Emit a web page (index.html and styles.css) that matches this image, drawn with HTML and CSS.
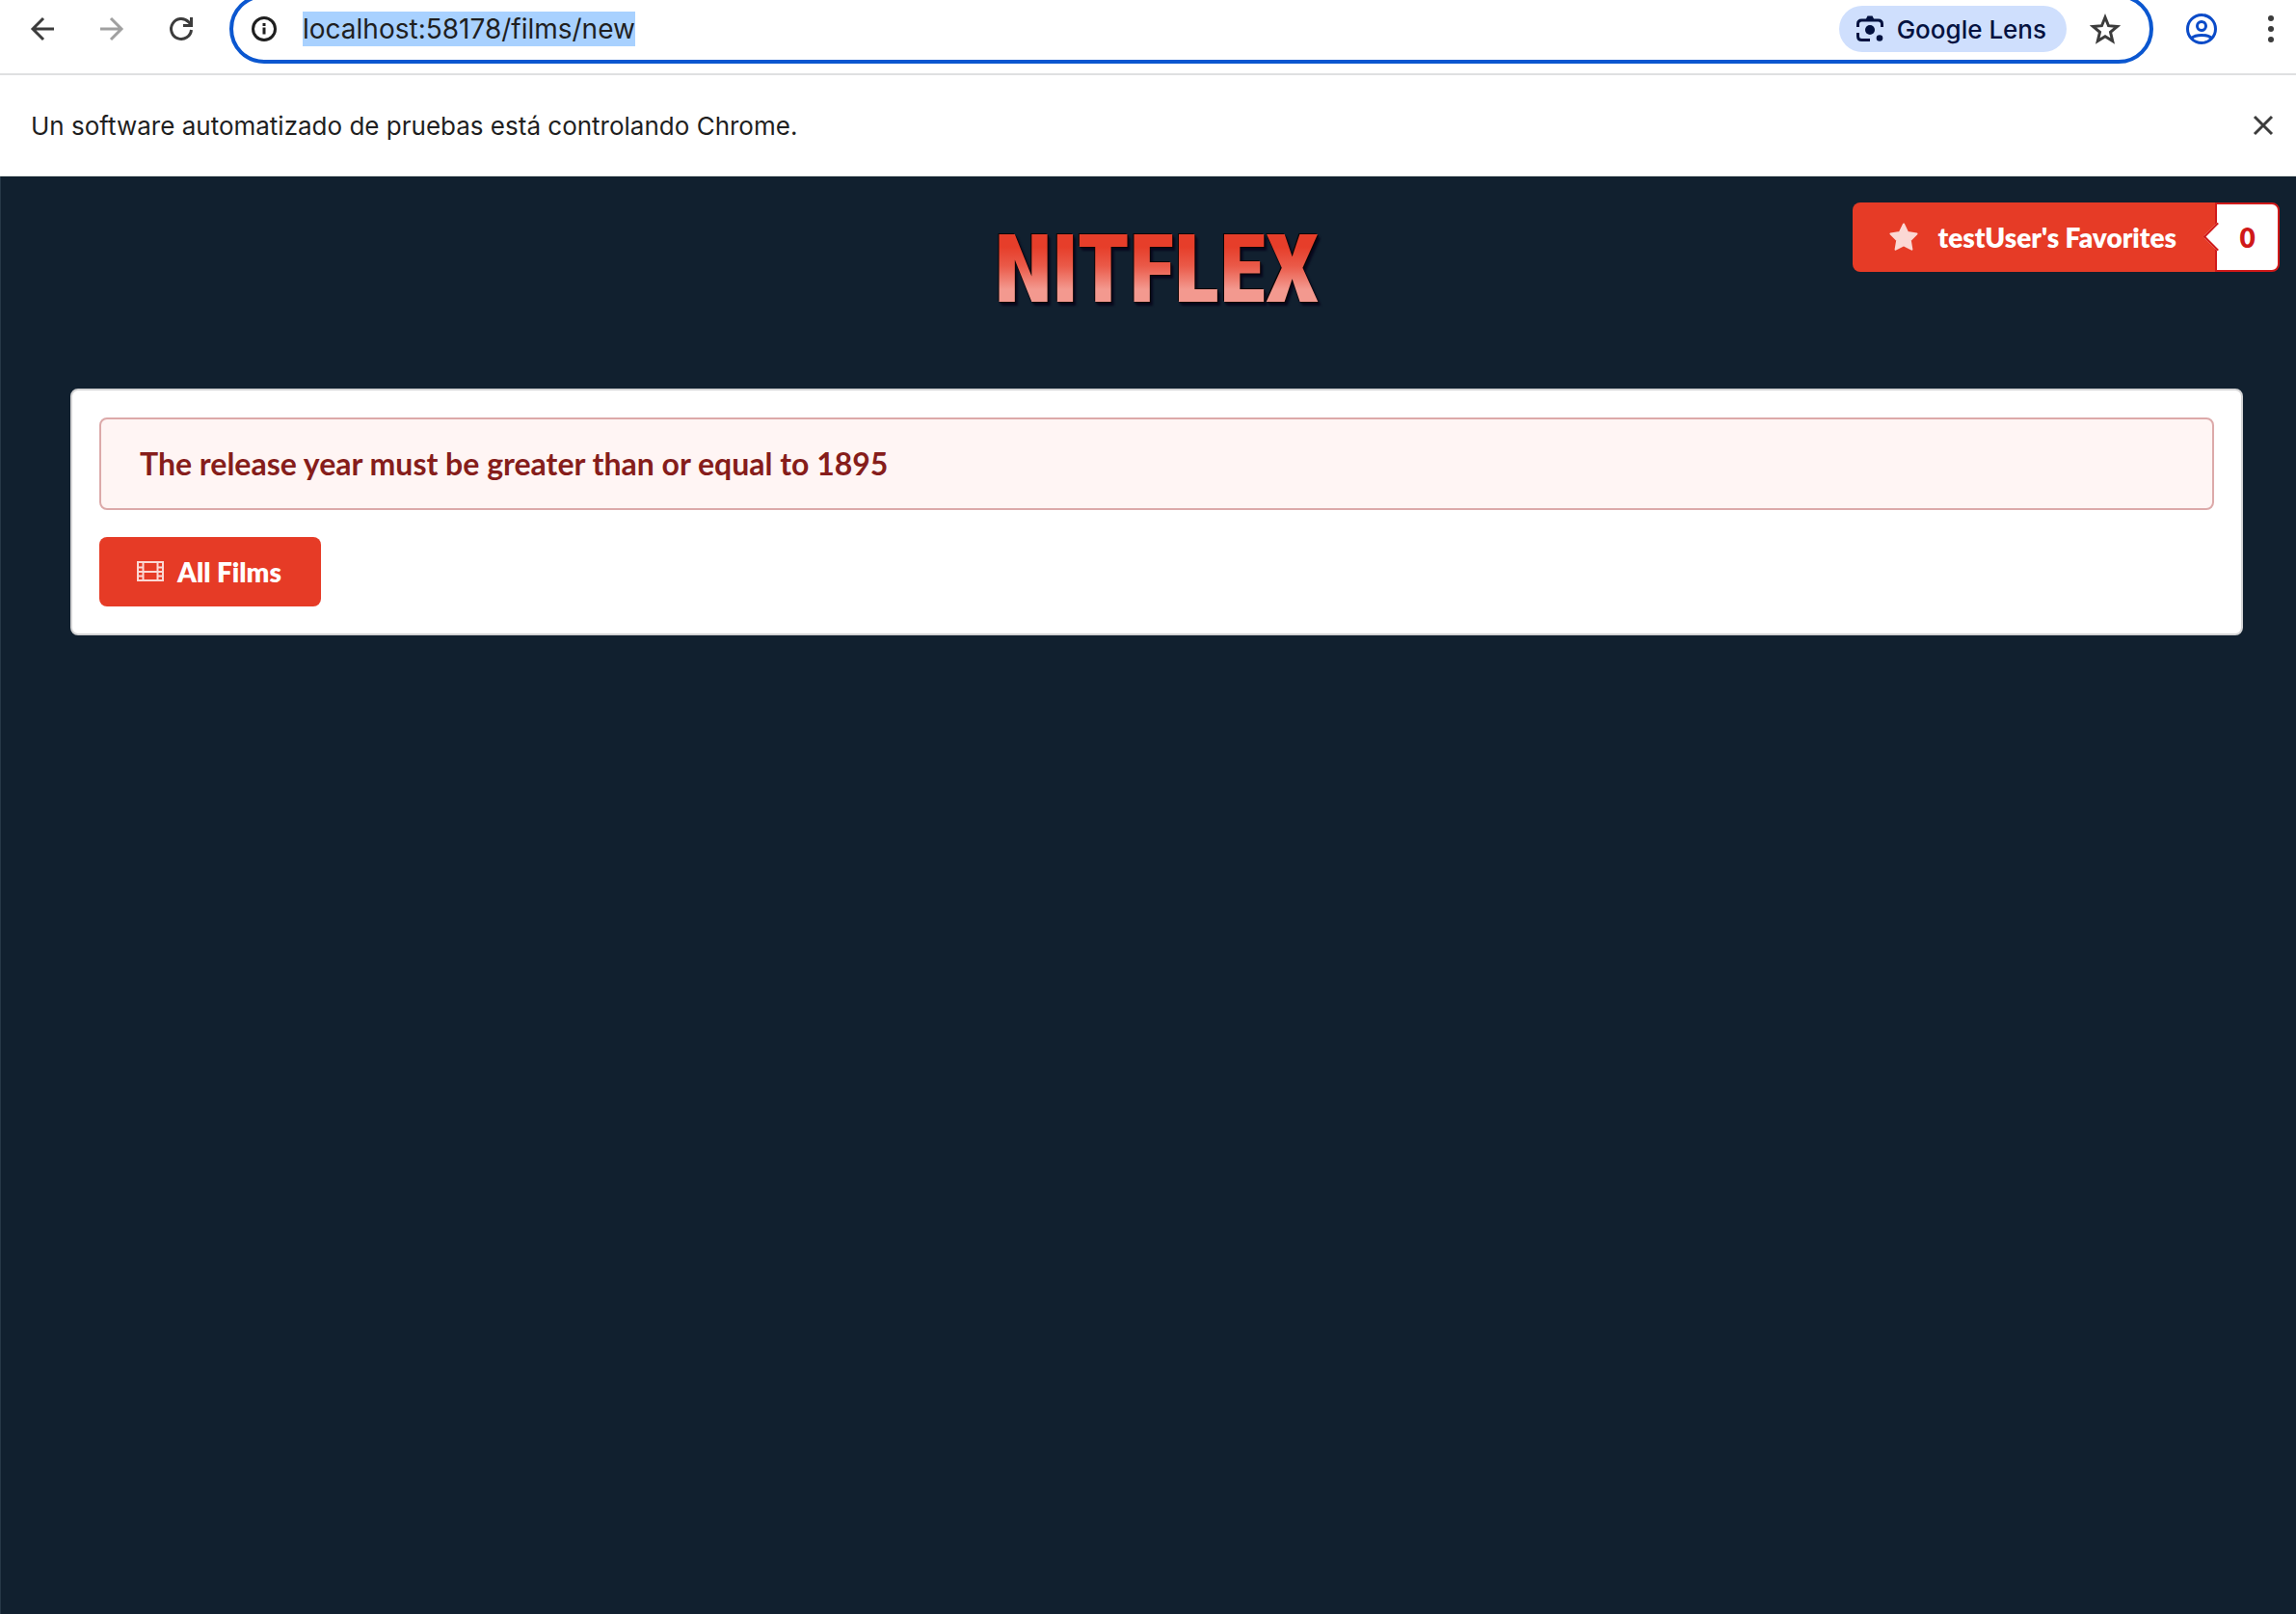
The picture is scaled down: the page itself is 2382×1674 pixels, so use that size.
FILE: index.html
```html
<!DOCTYPE html>
<html lang="es">
<head>
<meta charset="utf-8">
<title>Nitflex</title>
<link rel="stylesheet" href="styles.css">
</head>
<body>
<header class="toolbar">
  <div class="nav-buttons">
    <button class="icon-button" type="button" aria-label="Atrás"><svg viewBox="0 0 32 32" width="32" height="32" fill="none" stroke="#3c3c3c" stroke-width="3"><path d="M28 16H6.500M17 5L6 16l11 11"/></svg></button>
    <button class="icon-button" type="button" aria-label="Adelante"><svg viewBox="0 0 32 32" width="32" height="32" fill="none" stroke="#a0a0a0" stroke-width="3"><path d="M4 16h21.500M15 5l11 11-11 11"/></svg></button>
    <button class="icon-button" type="button" aria-label="Recargar"><svg viewBox="0 0 32 32" width="32" height="32" fill="none" stroke="#3c3c3c" stroke-width="3"><path d="M26.500 17A10.500 10.500 0 1 1 23.500 8.600L26 11M26.500 4v8.500H18"/></svg></button>
  </div>
  <div class="omnibox">
    <svg viewBox="0 0 28 28" width="28" height="28" fill="none" stroke="#1f1f1f" stroke-width="3"><circle cx="14" cy="14" r="11.500"/><path d="M14 12.500v7M14 8v3"/></svg>
    <input class="address" type="text" value="localhost:58178/films/new" aria-label="Dirección">
    <button class="lens" type="button">
      <svg viewBox="0 0 32 32" width="32" height="32" fill="none" stroke="#041240" stroke-width="3"><path d="M3.500 14v-3q0-4 4-4h17q4 0 4 4v3M3.500 20v3.500q0 4 4 4H16"/><path d="M11.500 6.500l2-4h5l2 4z" fill="#041240" stroke="none"/><circle cx="16" cy="17" r="5" fill="#041240" stroke="none"/><circle cx="26" cy="25.500" r="3.300" fill="#041240" stroke="none"/></svg>
      Google Lens
    </button>
    <button class="icon-button" type="button" aria-label="Añadir a favoritos"><svg viewBox="0 0 32 32" width="32" height="32" fill="none" stroke="#3c3c3c" stroke-width="3"><path d="M16 4l3.500 8.700 9 .700-7 5.900 2.200 9.200L16 23.700l-7.700 4.800 2.200-9.200-7-5.900 9-.700z"/></svg></button>
  </div>
  <div class="nav-buttons">
    <button class="icon-button" type="button" aria-label="Perfil"><svg viewBox="0 0 32 32" width="32" height="32" fill="none" stroke="#0b4bc8" stroke-width="3"><circle cx="16" cy="16" r="14.500"/><circle cx="16" cy="13" r="4.500"/><path d="M5.500 25.500Q9 22.500 16 22.500t10.500 3"/></svg></button>
    <button class="icon-button" type="button" aria-label="Menú"><svg viewBox="0 0 32 32" width="32" height="32" fill="#3c3c3c"><circle cx="16" cy="5" r="3"/><circle cx="16" cy="16" r="3"/><circle cx="16" cy="27" r="3"/></svg></button>
  </div>
</header>
<div class="infobar">
  <p class="infobar-text">Un software automatizado de pruebas está controlando Chrome.</p>
  <button class="icon-button" type="button" aria-label="Cerrar"><svg viewBox="0 0 32 32" width="32" height="32" fill="none" stroke="#3c3c3c" stroke-width="3"><path d="M7 7l18 18M25 7L7 25"/></svg></button>
</div>
<main class="page">
  <div class="masthead">
    <h1 class="logo">NITFLEX</h1>
    <button class="favorites" type="button">
      <span class="button"><svg viewBox="0 0 32 32" width="32" height="32" fill="#fbd8d4" stroke="#fbd8d4" stroke-width="2" stroke-linejoin="round"><path d="M16 2.500l4.200 8.600 9.300 1.400-6.700 6.700 1.600 9.500L16 24.300l-8.400 4.400 1.600-9.500-6.700-6.700 9.300-1.400z"/></svg>testUser's Favorites</span>
      <span class="count">0</span>
    </button>
  </div>
  <section class="segment">
    <div class="message" role="alert">The release year must be greater than or equal to 1895</div>
    <a class="button" href="#films"><svg viewBox="0 0 32 24" width="32" height="24" fill="none" stroke="#fbd8d4" stroke-width="2"><path d="M3 1v21M29 1v21M8.500 2v20M23.500 2v20M3 2h26M3 7.500h5.500M3 12h5.500M3 16.500h5.500M23.500 7.500H29M23.500 12H29M23.500 16.500H29M3 21h26M8.500 12h15"/></svg>All Films</a>
  </section>
</main>
</body>
</html>
```
FILE: styles.css
```css
* { box-sizing: border-box; }

body {
  margin: 0;
  background: #11202f;
  font-family: Inter, sans-serif;
  color: #1f1f1f;
}

button {
  border: 0;
  background: none;
  padding: 0;
  font: inherit;
  color: inherit;
  cursor: pointer;
}

svg { display: block; flex: none; }

/* Browser toolbar, scrolled partly above the window */
.toolbar {
  display: flex;
  align-items: center;
  gap: 34px;
  height: 94px;
  margin-top: -16px;
  padding: 0 10px 0 28px;
  background: #fff;
  border-bottom: 2px solid #dfe0e1;
}

.nav-buttons { display: flex; gap: 40px; }

.omnibox {
  flex: 1;
  display: flex;
  align-items: center;
  height: 72px;
  border: 4px solid #0b57d0;
  border-radius: 36px;
  padding: 0 30px 0 18px;
}

.address {
  field-sizing: content;
  border: 0;
  padding: 0;
  margin: 0 auto 0 26px;
  height: 36px;
  background: #a8d1ff;
  color: #1f1f1f;
  font: 28px Inter, sans-serif;
}

.lens {
  display: flex;
  align-items: center;
  gap: 12px;
  height: 48px;
  padding: 0 21px 0 16px;
  margin-right: 24px;
  border-radius: 24px;
  background: #cfdffd;
  color: #041240;
  font: 500 26px Inter, sans-serif;
}

.infobar {
  display: flex;
  justify-content: space-between;
  align-items: center;
  height: 105px;
  padding: 0 18px 0 32px;
  background: #fff;
  border-bottom: 1px solid #dfe4e1;
}

.infobar-text { margin: 0; font-size: 26px; }

/* Film page */
.page {
  border-left: 1px solid #263746;
  padding-top: 27px;
  min-height: calc(100vh - 183px);
  font-family: Lato, sans-serif;
  font-size: 28px;
  line-height: 28px;
}

.masthead {
  display: grid;
  grid-template-columns: 1fr auto 1fr;
  align-items: start;
  padding: 0 17px 0 34px;
  margin-bottom: 75px;
}

.logo {
  grid-column: 2;
  margin: 22px 0 0;
  font: 900 98px/96px "Roboto Condensed", Roboto, sans-serif;
  color: transparent;
  background: linear-gradient(#e63e2a 24px, #ea5a49 44px, #f3998f 68px);
  -webkit-background-clip: text;
  background-clip: text;
  filter: drop-shadow(1px 1px 0 #0a0505) drop-shadow(-1px -1px 0 #0a0505) drop-shadow(2px 3px 1px #07071c);
}

.button {
  display: inline-flex;
  align-items: center;
  height: 72px;
  padding: 0 41px 0 37px;
  border-radius: 8px;
  gap: 12px;
  background: #e63b26;
  color: #fff;
  font-weight: 800;
  text-decoration: none;
}

.favorites {
  grid-column: 3;
  justify-self: end;
  display: flex;
  font-weight: 800;
}

.favorites .button { border-radius: 8px 0 0 8px; gap: 20px; }

.count {
  position: relative;
  display: flex;
  align-items: center;
  justify-content: center;
  width: 67px;
  height: 72px;
  margin-left: -1px;
  border: 2px solid #d01919;
  border-radius: 0 8px 8px 0;
  background: #fff;
  color: #d01919;
}

/* Pointer on the left edge of the counter */
.count::before {
  content: "";
  position: absolute;
  left: -10px;
  top: 23px;
  width: 19px;
  height: 19px;
  border: 2px solid #d01919;
  border-width: 0 0 2px 2px;
  background: #fff;
  transform: rotate(45deg);
}

.segment {
  margin: 0 55px 0 72px;
  padding: 28px;
  border: 2px solid #d4d4d5;
  border-radius: 8px;
  background: #fff;
}

.message {
  margin-bottom: 28px;
  padding: 28px 40px;
  border: 2px solid #dca9a9;
  border-radius: 8px;
  background: #fff5f4;
  color: #861d1b;
  font-size: 32px;
  font-weight: 700;
  line-height: 36px;
}

.segment .button { display: flex; width: fit-content; }
```
